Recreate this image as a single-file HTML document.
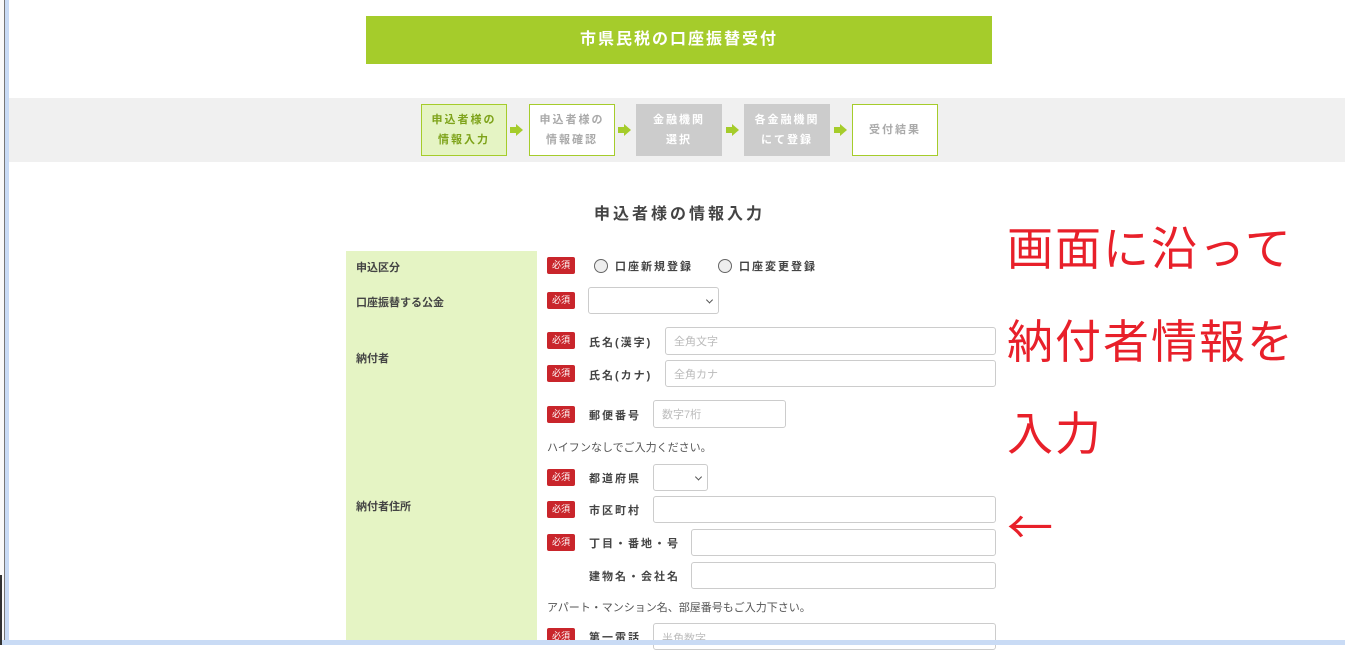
<!DOCTYPE html>
<html><head><meta charset="utf-8"><style>
*{margin:0;padding:0;box-sizing:border-box}
body{width:1345px;height:645px;overflow:hidden;background:#fff;position:relative;font-family:"Liberation Sans","Noto Sans CJK JP",sans-serif;color:#333}
.a{position:absolute}
.title{left:366px;top:16px;width:626px;height:48px;background:#a5cc2b;color:#fff;font-weight:bold;font-size:16px;letter-spacing:2px;text-align:center;line-height:48px}
.band{left:9px;top:98px;width:1336px;height:64px;background:#f0f0f0}
.step{top:104px;width:86px;height:52px;font-size:11px;letter-spacing:2px;text-align:center;display:flex;align-items:center;justify-content:center;line-height:20px;font-weight:bold}
.s1{background:#e5f4c4;border:1px solid #a5cc2b;color:#7ea31a}
.s2{background:#fff;border:1px solid #a5cc2b;color:#aaa}
.s3{background:#ccc;color:#fff}
.arr{top:124px;width:0;height:0;border-top:6px solid transparent;border-bottom:6px solid transparent;border-left:7px solid #a5cc2b}
.arr:before{content:"";position:absolute;left:-13px;top:-3px;width:6px;height:6px;background:#a5cc2b}
.h{left:0;width:1345px;top:200px;text-align:center;font-size:16px;font-weight:bold;letter-spacing:3px;color:#444;padding-left:14px}
.lab{left:346px;top:251px;width:191px;height:394px;background:#e5f4c4}
.lt{left:356px;font-size:11px;font-weight:bold;color:#444}
.req{width:28px;height:17px;background:#c9252b;border-radius:2px;color:#fff;font-size:9px;text-align:center;line-height:17px;left:547px}
.fl{font-size:11px;font-weight:bold;letter-spacing:2px;color:#444}
.in{border:1px solid #ccc;border-radius:3px;background:#fff;font-size:11px;color:#bbb;padding-left:8px;display:flex;align-items:center}
.note{left:547px;font-size:11px;color:#555}
.rad{width:14px;height:14px;border:1px solid #666;border-radius:50%;background:#eee}
.chev{position:absolute;right:6px;top:50%;width:5px;height:5px;border-right:1px solid #555;border-bottom:1px solid #555;transform:translateY(-70%) rotate(45deg)}
.red{left:1007px;font-size:46px;letter-spacing:2px;color:#e8202a;font-family:"Noto Sans CJK JP",sans-serif;line-height:50px}
</style></head><body>
<div class="a title">市県民税の口座振替受付</div>
<div class="a band"></div>
<div class="a step s1" style="left:421px">申込者様の<br>情報入力</div>
<div class="a arr" style="left:516px"></div>
<div class="a step s2" style="left:529px">申込者様の<br>情報確認</div>
<div class="a arr" style="left:624px"></div>
<div class="a step s3" style="left:636px">金融機関<br>選択</div>
<div class="a arr" style="left:732px"></div>
<div class="a step s3" style="left:744px">各金融機関<br>にて登録</div>
<div class="a arr" style="left:840px"></div>
<div class="a step s2" style="left:852px">受付結果</div>
<div class="a h">申込者様の情報入力</div>
<div class="a lab"></div>
<div class="a lt" style="top:259px">申込区分</div>
<div class="a lt" style="top:294px">口座振替する公金</div>
<div class="a lt" style="top:350px">納付者</div>
<div class="a lt" style="top:498px">納付者住所</div>

<div class="a req" style="top:257px">必須</div>
<div class="a rad" style="left:594px;top:259px"></div>
<div class="a fl" style="left:615px;top:258px">口座新規登録</div>
<div class="a rad" style="left:718px;top:259px"></div>
<div class="a fl" style="left:739px;top:258px">口座変更登録</div>

<div class="a req" style="top:292px">必須</div>
<div class="a in" style="left:588px;top:287px;width:131px;height:27px"><span class="chev"></span></div>

<div class="a req" style="top:332px">必須</div>
<div class="a fl" style="left:589px;top:334px">氏名(漢字)</div>
<div class="a in" style="left:665px;top:327px;width:331px;height:28px">全角文字</div>
<div class="a req" style="top:365px">必須</div>
<div class="a fl" style="left:589px;top:367px">氏名(カナ)</div>
<div class="a in" style="left:665px;top:360px;width:331px;height:27px">全角カナ</div>

<div class="a req" style="top:406px">必須</div>
<div class="a fl" style="left:589px;top:407px">郵便番号</div>
<div class="a in" style="left:653px;top:400px;width:133px;height:28px">数字7桁</div>
<div class="a note" style="top:439px">ハイフンなしでご入力ください。</div>

<div class="a req" style="top:469px">必須</div>
<div class="a fl" style="left:589px;top:470px">都道府県</div>
<div class="a in" style="left:653px;top:464px;width:55px;height:27px"><span class="chev"></span></div>
<div class="a req" style="top:501px">必須</div>
<div class="a fl" style="left:589px;top:502px">市区町村</div>
<div class="a in" style="left:653px;top:496px;width:343px;height:27px"></div>
<div class="a req" style="top:534px">必須</div>
<div class="a fl" style="left:589px;top:535px">丁目・番地・号</div>
<div class="a in" style="left:691px;top:529px;width:305px;height:27px"></div>
<div class="a fl" style="left:589px;top:568px">建物名・会社名</div>
<div class="a in" style="left:691px;top:562px;width:305px;height:27px"></div>
<div class="a note" style="top:599px">アパート・マンション名、部屋番号もご入力下さい。</div>
<div class="a req" style="top:628px">必須</div>
<div class="a fl" style="left:589px;top:629px">第一電話</div>
<div class="a in" style="left:653px;top:623px;width:343px;height:27px;align-items:flex-start;padding-top:6px">半角数字</div>

<div class="a red" style="top:221px">画面に沿って</div>
<div class="a red" style="top:314px">納付者情報を</div>
<div class="a red" style="top:406px">入力</div>
<div class="a red" style="top:500px">←</div>

<div class="a" style="left:0;top:0;width:4px;height:645px;background:#fafafa"></div>
<div class="a" style="left:4px;top:0;width:1px;height:645px;background:#777"></div>
<div class="a" style="left:5px;top:0;width:4px;height:645px;background:#c9dbf5"></div>
<div class="a" style="left:0;top:640px;width:1345px;height:5px;background:#c9dbf5"></div>
<div class="a" style="left:0;top:575px;width:2px;height:70px;background:#333"></div>
</body></html>
